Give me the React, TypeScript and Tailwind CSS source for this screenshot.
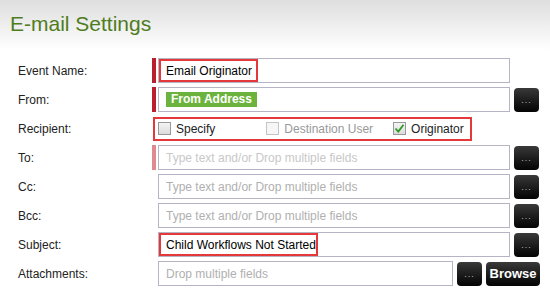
import React from "react";

const font = { fontFamily: '"Liberation Sans", Arial, sans-serif' };

function Btn({ children, w = "w-[25px]" }: { children?: React.ReactNode; w?: string }) {
  return (
    <div
      className={`${w} h-[24px] rounded-[4px] bg-gradient-to-b from-[#3a3a3a] to-[#050505] flex items-center justify-center text-[#bbb] text-[9px] leading-none shrink-0`}
    >
      {children ?? <span className="tracking-[1px] mt-[2px]">...</span>}
    </div>
  );
}

function Label({ text }: { text: string }) {
  return <div className="w-[152px] pl-[18px] text-[12px] text-[#222] shrink-0 whitespace-nowrap">{text}</div>;
}

function Row({
  label,
  marker,
  children,
  btn = true,
}: {
  label: string;
  marker?: string;
  children: React.ReactNode;
  btn?: boolean;
}) {
  return (
    <div className="flex items-center h-[25px] mb-[4px]">
      <Label text={label} />
      <div className={`w-[4px] h-[25px] shrink-0 ${marker ?? ""}`} />
      <div className="ml-[2px] w-[352px] h-[25px] border border-[#b4b4c4] bg-white relative flex items-center px-[7px] text-[12px] shrink-0 whitespace-nowrap">
        {children}
      </div>
      {btn ? (
        <div className="ml-[4px]">
          <Btn />
        </div>
      ) : null}
    </div>
  );
}

const ph = "text-[#b0b0b0]";

export default function App() {
  return (
    <div className="w-[550px] h-[295px] bg-white overflow-hidden" style={font}>
      <div className="h-[50px] bg-gradient-to-b from-[#dedede] to-[#ffffff] pl-[10px] pt-[11px]">
        <div className="text-[21px] leading-[26px] text-[#4f7d1e]">E-mail Settings</div>
      </div>
      <div className="pt-[8px]">
        <Row label="Event Name:" marker="bg-[#b8202e]" btn={false}>
          <div className="absolute left-0 top-0 bottom-0 w-[99px] border-2 border-[#e5383b]" />
          <span className="text-black">Email Originator</span>
        </Row>
        <Row label="From:" marker="bg-[#b8202e]">
          <span className="bg-[#6bb33c] text-white font-bold px-[5px] h-[15px] leading-[15px] flex items-center">
            From Address
          </span>
        </Row>
        <div className="flex items-center h-[25px] mb-[4px]">
          <Label text="Recipient:" />
          <div className="ml-[1px] w-[319px] h-[24px] border-2 border-[#e5383b] flex items-center text-[12px] shrink-0 whitespace-nowrap">
            <div className="ml-[3px] w-[13px] h-[13px] shrink-0 border border-[#999] bg-gradient-to-b from-[#f4f4f4] to-[#dcdcdc]" />
            <span className="ml-[5px] text-[#222]">Specify</span>
            <div className="ml-[51px] w-[13px] h-[13px] shrink-0 border border-[#c4c4c4] bg-[#f6f6f6]" />
            <span className="ml-[5px] text-[#999]">Destination User</span>
            <div className="ml-[20px] w-[13px] h-[13px] shrink-0 border border-[#999] bg-gradient-to-b from-[#f4f4f4] to-[#dcdcdc] flex items-center justify-center">
              <svg width="11" height="11" viewBox="0 0 11 11">
                <path d="M1.5 5.5 L4.3 8.5 L9.5 1.8" stroke="#2a9a22" strokeWidth="1.8" fill="none" />
              </svg>
            </div>
            <span className="ml-[5px] text-[#222]">Originator</span>
          </div>
        </div>
        <Row label="To:" marker="bg-[#e08a90]">
          <span className="text-[#c8c8c8]">Type text and/or Drop multiple fields</span>
        </Row>
        <Row label="Cc:">
          <span className={ph}>Type text and/or Drop multiple fields</span>
        </Row>
        <Row label="Bcc:">
          <span className={ph}>Type text and/or Drop multiple fields</span>
        </Row>
        <Row label="Subject:">
          <div className="absolute left-0 top-0 bottom-0 w-[159px] border-2 border-[#e5383b]" />
          <span className="text-black">Child Workflows Not Started</span>
        </Row>
        <div className="flex items-center h-[25px]">
          <Label text="Attachments:" />
          <div className="ml-[6px] w-[295px] h-[25px] border border-[#b4b4c4] flex items-center px-[7px] text-[12px] shrink-0 whitespace-nowrap">
            <span className={ph}>Drop multiple fields</span>
          </div>
          <div className="ml-[4px]">
            <Btn />
          </div>
          <div className="ml-[4px]">
            <Btn w="w-[54px]">
              <span className="text-white text-[13px] font-bold">Browse</span>
            </Btn>
          </div>
        </div>
      </div>
    </div>
  );
}
